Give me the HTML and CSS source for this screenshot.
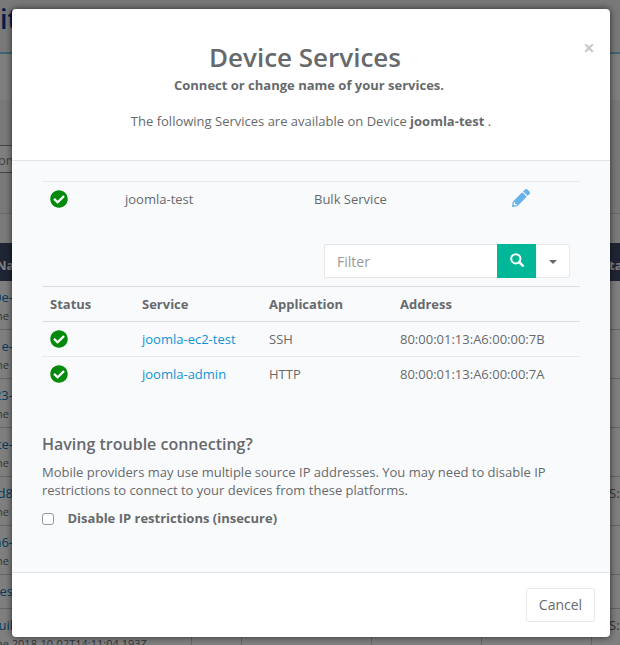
FILE: index.html
```html
<!DOCTYPE html>
<html lang="en">
<head>
<meta charset="utf-8">
<title>Device Services</title>
<link rel="stylesheet" href="styles.css">
</head>
<body>
<svg class="sprite" aria-hidden="true">
  <symbol id="check" viewBox="0 0 512 512"><path fill="currentColor" d="M504 256c0 137-111 248-248 248S8 393 8 256 119 8 256 8s248 111 248 248zM227 387l184-184c6-6 6-16 0-22l-23-23c-6-6-16-6-22 0L216 308l-70-70c-6-6-16-6-22 0l-23 23c-6 6-6 16 0 22l104 104c6 6 16 6 22 0z"/></symbol>
</svg>
<div class="page">
  <div class="brand">it</div>
  <div class="subbar"></div>
  <div class="filters"><div class="field">on</div></div>
  <div class="space"></div>
  <div class="row head"><div>Na</div><div></div><div></div><div></div><div></div><div>ta</div></div>
  <div class="row"><div><a>0e-</a><small>ne</small></div><div></div><div></div><div></div><div></div><div></div></div>
  <div class="row"><div><a>e-</a><small>ne</small></div><div></div><div></div><div></div><div></div><div></div></div>
  <div class="row"><div><a>23-</a><small>ne</small></div><div></div><div></div><div></div><div></div><div></div></div>
  <div class="row"><div><a>te-</a><small>ne</small></div><div></div><div></div><div></div><div></div><div></div></div>
  <div class="row"><div><a>d8</a><small>ne</small></div><div></div><div></div><div></div><div></div><div>S:</div></div>
  <div class="row"><div><a>a6-</a><small>ne</small></div><div></div><div></div><div></div><div></div><div></div></div>
  <div class="row short"><div><a>tes</a></div><div></div><div></div><div></div><div></div><div></div></div>
  <div class="row last"><div><a>uil</a><small>ne 2018-10-02T14:11:04.193Z</small></div><div></div><div></div><div></div><div></div><div>S:</div></div>
</div>
<div class="backdrop">
  <div class="modal">
    <header>
      <button class="close">×</button>
      <h1>Device Services</h1>
      <p class="lead">Connect or change name of your services.</p>
      <p>The following Services are available on Device <b>joomla-test</b> .</p>
    </header>
    <main>
      <div class="bulk">
        <svg class="check"><use href="#check"/></svg>
        <span>joomla-test</span><span>Bulk Service</span>
        <svg class="pencil" viewBox="0 0 512 512"><path fill="currentColor" d="M498 142l-46 46c-5 5-12 5-17 0L324 77c-5-5-5-12 0-17l46-46c19-19 49-19 68 0l60 60c19 19 19 49 0 68zm-214-42L22 362 0 484c-3 17 12 31 28 28l122-21 262-262c5-5 5-12 0-17L301 100c-5-5-12-5-17 0zM88 424h48v36l-64 12-32-32 12-64h36v48z"/></svg>
      </div>
      <div class="search">
        <input type="text" placeholder="Filter">
        <button class="go"><svg viewBox="0 0 14 14"><circle cx="5.8" cy="5.8" r="4.6" fill="none" stroke="currentColor" stroke-width="2"/><path d="M9.2 9.2l3.5 3.5" stroke="currentColor" stroke-width="2.6" stroke-linecap="round"/></svg></button>
        <button class="more"><i></i></button>
      </div>
      <div class="services">
        <div class="line th"><span>Status</span><span>Service</span><span>Application</span><span>Address</span></div>
        <div class="line strong"><svg class="check"><use href="#check"/></svg><a>joomla-ec2-test</a><span>SSH</span><span>80:00:01:13:A6:00:00:7B</span></div>
        <div class="line"><svg class="check"><use href="#check"/></svg><a>joomla-admin</a><span>HTTP</span><span>80:00:01:13:A6:00:00:7A</span></div>
      </div>
      <h2>Having trouble connecting?</h2>
      <p class="help">Mobile providers may use multiple source IP addresses. You may need to disable IP restrictions to connect to your devices from these platforms.</p>
      <label><input type="checkbox"><b>Disable IP restrictions (insecure)</b></label>
    </main>
    <footer><button class="cancel">Cancel</button></footer>
  </div>
</div>
</body>
</html>
```
FILE: styles.css
```css
* { box-sizing: border-box; }
body { margin: 0; height: 645px; overflow: hidden; font: 13px/18px "Open Sans", sans-serif; color: #676a6c; }
button, input { font-family: inherit; color: inherit; }
h1, h2, p { margin: 0; }
.sprite { position: absolute; width: 0; height: 0; }

.page { height: 645px; overflow: hidden; background: #fff; }
.brand { height: 54px; background: #f3f3f4; border-bottom: 2px solid #7cc8ec; color: #003a96; font-size: 27px; font-weight: 600; line-height: 38px; padding-left: 0; }
.subbar { height: 46px; background: #fff; }
.filters { height: 114px; background: #f3f3f4; border-bottom: 1px solid #d5d5d5; padding-top: 45px; }
.field { height: 28px; width: 100px; border: solid #888; border-width: 1px 0; background: #fff; line-height: 29px; margin-left: -2px; color: #888; }
.space { height: 29px; background: #f6f6f6; }
.row { display: grid; grid-template-columns: 192px 50px 130px 110px 110px 1fr; height: 49px; border-bottom: 1px solid #ccc; background: #fff; }
.row > div { border-right: 1px solid #ccc; white-space: nowrap; }
.row > div:first-child { padding-top: 7px; }
.row > div:last-child { border: 0; padding: 7px 0 0 17px; }
.row a { display: flex; justify-content: flex-end; width: 13px; color: #0876c0; }
.row small { display: block; margin-left: -4px; font-size: 11px; line-height: 19px; }
.row.head { height: 38px; background: #404b68; color: #fff; font-weight: 700; border: 0; }
.row.head > div { border-color: #404b68; }
.row.head > div:first-child { padding: 13px 0 0; margin-left: -4px; }
.row.head > div:last-child { padding-top: 13px; }
.row.short { height: 34px; }

.backdrop { position: absolute; inset: 0; padding: 9px 10px 8px 12px; background: rgba(0, 0, 0, .5); }
.modal { height: 628px; background: #fff; border-radius: 4px; box-shadow: 0 0 7px rgba(0, 0, 0, .65); }
header { position: relative; height: 152px; padding-top: 30px; text-align: center; border-bottom: 1px solid #e1e3e6; }
h1 { font-size: 26px; line-height: 36px; font-weight: 600; margin-right: 12px; }
header .lead { font-weight: 700; margin: 1px 4px 18px 0; }
.close { position: absolute; right: 15px; top: 27px; padding: 0; border: 0; background: none; font-size: 20px; line-height: 24px; font-weight: 700; color: #c8c8c8; width: 12px; }
main { height: 411px; padding: 20px 30px 0; background: #f9fafc; }
.check { display: block; width: 18px; height: 18px; color: #038a0b; margin-top: -1px; margin-left: -.5px; }
.bulk { display: grid; grid-template-columns: 75px 189px 198px 18px; align-items: center; height: 35px; padding-left: 8px; border-top: 1px solid #e7eaec; }
.pencil { width: 18px; height: 18px; color: #67b2e8; margin-top: -2px; }
.search { display: flex; justify-content: flex-end; margin: 28px 10px 8px 0; height: 34px; }
.search input { width: 173px; border: 1px solid #e5e6e7; border-right: 0; border-radius: 2px 0 0 2px; padding: 0 12px; font-size: 14px; background: #fff; }
.search input::placeholder { color: #999; opacity: 1; }
.go { width: 39px; padding: 0 0 0 1px; border: 0; background: #00b898; color: #fff; }
.go svg { display: block; width: 14px; height: 14px; margin: -2px auto 0; }
.more { display: grid; place-items: center; width: 34px; padding: 1px 0 0; border: 1px solid #e7eaec; border-left-color: #f2f2f2; border-radius: 0 3px 3px 0; background: #fff; }
.more i { border: 4px solid transparent; border-top-color: #676a6c; border-bottom: 0; }
.line { display: grid; grid-template-columns: 92px 127px 131px 1fr; align-items: center; height: 35px; padding-left: 8px; border-top: 1px solid #e7eaec; }
.line.th, .line.strong { border-top-color: #dcdee0; }
.line.th { font-weight: 700; }
.line a { color: #1193d4; }
h2 { margin-top: 42px; font-size: 16px; line-height: 22px; font-weight: 600; }
.help { margin-top: 8px; }
label { display: flex; align-items: center; margin-top: 10px; }
label input { margin: 1px 13.5px 0 0; width: 12px; height: 12px; appearance: none; border: 1px solid #999; border-radius: 3px; background: #fff; }
footer { display: flex; justify-content: flex-end; height: 65px; padding: 15px; border-top: 1px solid #e1e3e6; }
.cancel { width: 69px; height: 34px; padding: 0 0 2px; border: 1px solid #e7eaec; border-radius: 3px; background: #fff; font-size: 14px; }
```
